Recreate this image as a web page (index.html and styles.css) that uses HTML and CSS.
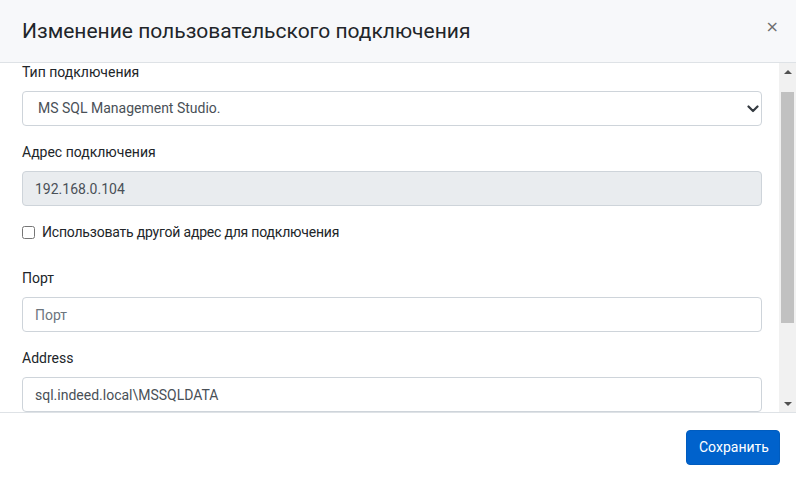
FILE: index.html
```html
<!DOCTYPE html>
<html lang="ru">
<head>
<meta charset="utf-8">
<title>Изменение пользовательского подключения</title>
<link rel="stylesheet" href="styles.css">
</head>
<body>
<div class="modal">
  <div class="modal-header">
    <h5 class="modal-title">Изменение пользовательского подключения</h5>
    <button class="close" type="button" aria-label="Close">×</button>
  </div>
  <div class="modal-body">
    <div class="body-content">
      <form class="form">
        <div class="form-group">
          <label class="form-label">Тип подключения</label>
          <div class="select-wrap">
            <select class="form-control form-select">
              <option>MS SQL Management Studio.</option>
            </select>
            <svg class="chevron" width="12" height="8" viewBox="0 0 12 8"><path d="M1.5 1.5 L6 6 L10.5 1.5" fill="none" stroke="#343a40" stroke-width="2.2" stroke-linecap="round" stroke-linejoin="round"/></svg>
          </div>
        </div>
        <div class="form-group">
          <label class="form-label">Адрес подключения</label>
          <input class="form-control" type="text" value="192.168.0.104" disabled>
        </div>
        <div class="form-check">
          <input class="form-check-input" type="checkbox" id="other">
          <label class="form-check-label" for="other">Использовать другой адрес для подключения</label>
        </div>
        <div class="form-group">
          <label class="form-label">Порт</label>
          <input class="form-control" type="text" placeholder="Порт">
        </div>
        <div class="form-group">
          <label class="form-label">Address</label>
          <input class="form-control" type="text" value="sql.indeed.local\MSSQLDATA">
        </div>
      </form>
    </div>
    <div class="scrollbar">
      <div class="sb-btn"><span class="tri-up"></span></div>
      <div class="sb-track"><div class="sb-thumb"></div></div>
      <div class="sb-btn"><span class="tri-down"></span></div>
    </div>
  </div>
  <div class="modal-footer">
    <button class="btn-primary" type="button">Сохранить</button>
  </div>
</div>
</body>
</html>
```
FILE: styles.css
```css
* { box-sizing: border-box; }
html, body { margin: 0; padding: 0; background: #fff; }
body {
  font-family: Roboto, "Noto Sans", "Liberation Sans", sans-serif;
  font-size: 14px;
  line-height: 1.5;
  color: #212529;
}
.modal {
  width: 796px;
  height: 481px;
  display: flex;
  flex-direction: column;
  background: #fff;
}
.modal-header {
  height: 63px;
  flex: none;
  background: #f7f8fa;
  border-bottom: 1px solid #dee2e6;
  display: flex;
  align-items: center;
  justify-content: space-between;
  padding: 0 17px 0 22px;
}
.modal-title {
  margin: 0;
  font-size: 21px;
  font-weight: 400;
  line-height: 1.5;
  color: #212529;
  padding-top: 1px;
}
.close {
  border: 0;
  background: transparent;
  padding: 0;
  font-family: "DejaVu Sans", sans-serif;
  font-size: 16px;
  font-weight: 400;
  line-height: 1;
  color: #6f6f6f;
  margin-top: -8px;
}
.modal-body {
  flex: 1;
  display: flex;
  min-height: 0;
}
.body-content {
  flex: 1;
  overflow: hidden;
  padding: 0 17px 0 22px;
}
.form { margin-top: -1px; }
.form-group { margin-bottom: 16px; }
.form-label {
  display: block;
  margin-bottom: 8px;
  line-height: 21px;
}
.form-control {
  display: block;
  width: 100%;
  height: 35px;
  padding: 6px 12px;
  font-family: inherit;
  font-size: 14px;
  line-height: 21px;
  color: #495057;
  background: #fff;
  border: 1px solid #ced4da;
  border-radius: 4px;
  outline: none;
}
.form-control::placeholder { color: #6c757d; opacity: 1; }
.form-control:disabled { background: #e9ecef; color: #495057; opacity: 1; }
.select-wrap { position: relative; }
.form-select {
  appearance: none;
  -webkit-appearance: none;
  padding-left: 15px;
}
.chevron {
  position: absolute;
  right: 3px;
  top: 14px;
  pointer-events: none;
}
.form-check {
  display: flex;
  align-items: center;
  height: 21px;
  margin-bottom: 25px;
}
.form-check-input {
  width: 13px;
  height: 13px;
  margin: 0 7px 0 0;
}
.form-check-label { line-height: 21px; letter-spacing: -0.2px; }
.scrollbar {
  width: 17px;
  flex: none;
  background: #f1f1f1;
  display: flex;
  flex-direction: column;
}
.sb-btn {
  height: 17px;
  display: flex;
  align-items: center;
  justify-content: center;
}
.tri-up, .tri-down {
  width: 0; height: 0;
  border-left: 4px solid transparent;
  border-right: 4px solid transparent;
}
.tri-up { border-bottom: 4px solid #505050; }
.tri-down { border-top: 4px solid #505050; }
.sb-track { flex: 1; padding: 12px 2px 0; }
.sb-thumb { height: 231px; background: #c1c1c1; }
.modal-footer {
  height: 69px;
  flex: none;
  border-top: 1px solid #dee2e6;
  display: flex;
  justify-content: flex-end;
  align-items: center;
  padding: 0 16px 0 0;
}
.btn-primary {
  width: 94px;
  height: 35px;
  background: #0062cc;
  color: #fff;
  border: 1px solid #005cbf;
  border-radius: 4px;
  font-family: inherit;
  font-size: 14px;
  line-height: 21px;
  padding: 6px 12px;
  margin-top: 1px;
}
```
